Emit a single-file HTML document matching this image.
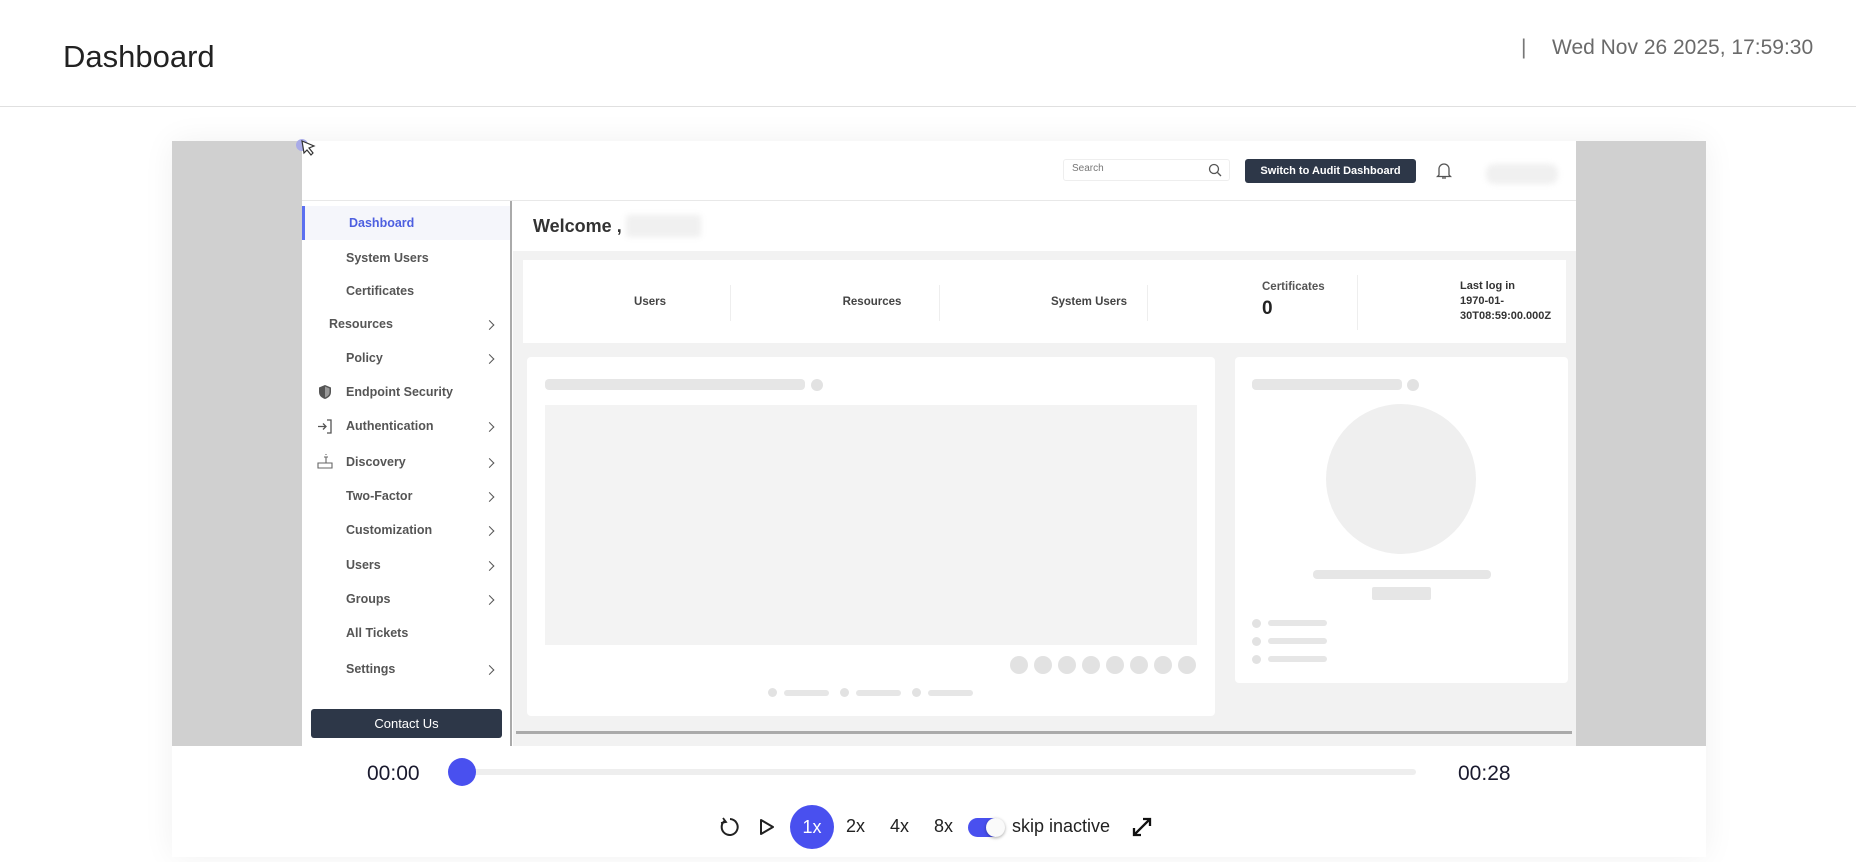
<!DOCTYPE html>
<html><head><meta charset="utf-8"><style>
*{box-sizing:border-box;margin:0;padding:0}
body{width:1856px;height:862px;overflow:hidden;background:#fff;font-family:"Liberation Sans",sans-serif;position:relative}
.a{position:absolute}
.sb{position:absolute;left:346px;font-size:12.5px;font-weight:bold;color:#555;transform:translateY(-50%)}
.chev{position:absolute;left:486px;width:7px;height:7px;border-right:1.5px solid #555;border-top:1.5px solid #555;transform:translateY(-50%) rotate(45deg)}
.sk{position:absolute;background:#e6e6e6;border-radius:4px}
.dot{position:absolute;background:#e2e2e2;border-radius:50%}
.st{position:absolute;font-size:11.5px;font-weight:bold;color:#444;transform:translate(-50%,-50%)}
.dv{position:absolute;top:285px;width:1px;height:36px;background:#eee}
</style></head><body>
<div class="a" style="left:63px;top:39px;font-size:31px;color:#222">Dashboard</div>
<div class="a" style="left:1521px;top:36px;font-size:21px;color:#777">|</div>
<div class="a" style="left:1552px;top:36px;font-size:21px;color:#6a6a6a">Wed Nov 26 2025, 17:59:30</div>
<div class="a" style="left:0;top:106px;width:1856px;height:1px;background:#e0e0e0"></div>

<div class="a" style="left:172px;top:141px;width:1534px;height:716px;background:#fff;box-shadow:0 0 30px rgba(0,0,0,0.06)"></div>
<div class="a" style="left:172px;top:141px;width:130px;height:605px;background:#d0d0d0"></div>
<div class="a" style="left:1576px;top:141px;width:130px;height:605px;background:#d0d0d0"></div>

<!-- app -->
<div class="a" style="left:302px;top:141px;width:1274px;height:605px;background:#fff"></div>
<div class="a" style="left:296px;top:139px;width:12px;height:12px;border-radius:50%;background:#a9abe8"></div>
<svg class="a" style="left:300px;top:139px" width="18" height="18" viewBox="0 0 18 18"><path d="M2 2 L14 7 L9 9 L13 14 L11 16 L7 11 L4 14 Z" fill="#fff" stroke="#333" stroke-width="1.2"/></svg>
<div class="a" style="left:302px;top:200px;width:1274px;height:1px;background:#e8e8e8"></div>
<div class="a" style="left:1063px;top:159px;width:167px;height:22px;border:1px solid #eee;border-radius:3px"></div>
<div class="a" style="left:1072px;top:163px;font-size:10px;color:#777">Search</div>
<svg class="a" style="left:1208px;top:163px" width="14" height="14" viewBox="0 0 14 14"><circle cx="6" cy="6" r="4.5" fill="none" stroke="#555" stroke-width="1.3"/><path d="M9.5 9.5 L13 13" stroke="#555" stroke-width="1.3"/></svg>
<div class="a" style="left:1245px;top:159px;width:171px;height:24px;background:#2d3748;border-radius:3px;color:#fff;font-size:11px;font-weight:bold;text-align:center;line-height:24px">Switch to Audit Dashboard</div>
<svg class="a" style="left:1436px;top:161px" width="16" height="20" viewBox="0 0 16 20"><path d="M3 14 V8 a5 5 0 0 1 10 0 V14 L14.5 15.5 H1.5 Z M6 17 h4" fill="none" stroke="#555" stroke-width="1.3"/></svg>
<div class="a" style="left:1486px;top:164px;width:72px;height:20px;background:#f0f0f0;border-radius:8px;filter:blur(3px)"></div>

<!-- sidebar -->
<div class="a" style="left:510px;top:201px;width:2px;height:545px;background:#aaa"></div>
<div class="a" style="left:302px;top:206px;width:208px;height:34px;background:#f5f6fb;border-left:3px solid #5b6ff0"></div>
<div class="sb" style="top:223px;left:349px;color:#4d5fe0">Dashboard</div>
<div class="sb" style="top:258px">System Users</div>
<div class="sb" style="top:291px">Certificates</div>
<div class="sb" style="top:324px;left:329px">Resources</div><div class="chev" style="top:325px"></div>
<div class="sb" style="top:358px">Policy</div><div class="chev" style="top:359px"></div>
<svg class="a" style="left:318px;top:384px" width="14" height="16" viewBox="0 0 14 16"><path d="M7 1 L13 3.5 V8 C13 12 10 14 7 15 C4 14 1 12 1 8 V3.5 Z" fill="#555"/><path d="M7 2.5 V13.5 C9.5 12.5 11.5 11 11.5 8 V4.5 Z" fill="#999"/></svg>
<div class="sb" style="top:392px">Endpoint Security</div>
<svg class="a" style="left:317px;top:419px" width="16" height="15" viewBox="0 0 16 15"><path d="M1 7.5 H9 M6 4.5 L9 7.5 L6 10.5 M10 1 H14 V14 H10" fill="none" stroke="#555" stroke-width="1.3"/></svg>
<div class="sb" style="top:426px">Authentication</div><div class="chev" style="top:427px"></div>
<svg class="a" style="left:317px;top:453px" width="16" height="16" viewBox="0 0 16 16"><path d="M1 10 H15 V15 H1 Z M9 10 V4 M7 4 H11 M9 1 V2" fill="none" stroke="#666" stroke-width="1.1"/></svg>
<div class="sb" style="top:462px">Discovery</div><div class="chev" style="top:463px"></div>
<div class="sb" style="top:496px">Two-Factor</div><div class="chev" style="top:497px"></div>
<div class="sb" style="top:530px">Customization</div><div class="chev" style="top:531px"></div>
<div class="sb" style="top:565px">Users</div><div class="chev" style="top:566px"></div>
<div class="sb" style="top:599px">Groups</div><div class="chev" style="top:600px"></div>
<div class="sb" style="top:633px">All Tickets</div>
<div class="sb" style="top:669px">Settings</div><div class="chev" style="top:670px"></div>
<div class="a" style="left:311px;top:709px;width:191px;height:29px;background:#2d3748;border-radius:3px;color:#fff;font-size:13px;text-align:center;line-height:29px">Contact Us</div>

<!-- main -->
<div class="a" style="left:513px;top:251px;width:1063px;height:495px;background:#f2f2f2"></div>
<div class="a" style="left:533px;top:216px;font-size:18px;font-weight:bold;color:#333">Welcome ,</div>
<div class="a" style="left:626px;top:215px;width:75px;height:22px;background:#f0f0f0;filter:blur(3px)"></div>
<div class="a" style="left:523px;top:260px;width:1043px;height:83px;background:#fff"></div>
<div class="st" style="left:650px;top:302px">Users</div>
<div class="st" style="left:872px;top:302px">Resources</div>
<div class="st" style="left:1089px;top:302px">System Users</div>
<div class="dv" style="left:730px"></div><div class="dv" style="left:939px"></div><div class="dv" style="left:1147px"></div><div class="dv" style="left:1357px;top:275px;height:55px"></div>
<div class="a" style="left:1262px;top:281px;font-size:11.5px;font-weight:bold;color:#555">Certificates</div>
<div class="a" style="left:1262px;top:298px;font-size:19px;font-weight:bold;color:#222">0</div>
<div class="a" style="left:1460px;top:279px;font-size:11px;font-weight:bold;color:#333;line-height:15px">Last log in<br>1970-01-<br>30T08:59:00.000Z</div>

<div class="a" style="left:527px;top:357px;width:688px;height:359px;background:#fff;border-radius:4px"></div>
<div class="sk" style="left:545px;top:379px;width:260px;height:11px"></div>
<div class="dot" style="left:811px;top:379px;width:12px;height:12px"></div>
<div class="a" style="left:545px;top:405px;width:652px;height:240px;background:#f3f3f3"></div>
<div class="dot" style="left:1010px;top:656px;width:18px;height:18px"></div>
<div class="dot" style="left:1034px;top:656px;width:18px;height:18px"></div>
<div class="dot" style="left:1058px;top:656px;width:18px;height:18px"></div>
<div class="dot" style="left:1082px;top:656px;width:18px;height:18px"></div>
<div class="dot" style="left:1106px;top:656px;width:18px;height:18px"></div>
<div class="dot" style="left:1130px;top:656px;width:18px;height:18px"></div>
<div class="dot" style="left:1154px;top:656px;width:18px;height:18px"></div>
<div class="dot" style="left:1178px;top:656px;width:18px;height:18px"></div>
<div class="dot" style="left:768px;top:688px;width:9px;height:9px"></div><div class="sk" style="left:784px;top:690px;width:45px;height:6px"></div>
<div class="dot" style="left:840px;top:688px;width:9px;height:9px"></div><div class="sk" style="left:856px;top:690px;width:45px;height:6px"></div>
<div class="dot" style="left:912px;top:688px;width:9px;height:9px"></div><div class="sk" style="left:928px;top:690px;width:45px;height:6px"></div>

<div class="a" style="left:1235px;top:357px;width:333px;height:326px;background:#fff;border-radius:4px"></div>
<div class="sk" style="left:1252px;top:379px;width:150px;height:11px"></div>
<div class="dot" style="left:1407px;top:379px;width:12px;height:12px"></div>
<div class="dot" style="left:1326px;top:404px;width:150px;height:150px;background:#efefef"></div>
<div class="sk" style="left:1313px;top:570px;width:178px;height:9px"></div>
<div class="sk" style="left:1372px;top:587px;width:59px;height:13px;border-radius:2px"></div>
<div class="dot" style="left:1252px;top:619px;width:9px;height:9px"></div><div class="sk" style="left:1268px;top:620px;width:59px;height:6px"></div>
<div class="dot" style="left:1252px;top:637px;width:9px;height:9px"></div><div class="sk" style="left:1268px;top:638px;width:59px;height:6px"></div>
<div class="dot" style="left:1252px;top:655px;width:9px;height:9px"></div><div class="sk" style="left:1268px;top:656px;width:59px;height:6px"></div>
<div class="a" style="left:516px;top:731px;width:1056px;height:3px;background:#aaa"></div>

<!-- player -->
<div class="a" style="left:367px;top:762px;font-size:21px;color:#1a1a2e">00:00</div>
<div class="a" style="left:1458px;top:762px;font-size:21px;color:#1a1a2e">00:28</div>
<div class="a" style="left:462px;top:769px;width:954px;height:6px;background:#eee;border-radius:3px"></div>
<div class="a" style="left:448px;top:758px;width:28px;height:28px;border-radius:50%;background:#4950ef"></div>
<svg class="a" style="left:719px;top:816px" width="22" height="22" viewBox="0 0 22 22"><path d="M6 4.5 A8 8 0 1 0 11 3" fill="none" stroke="#222" stroke-width="2"/><path d="M4 2 L7 6 L2 7" fill="none" stroke="#222" stroke-width="1.8"/></svg>
<svg class="a" style="left:759px;top:818px" width="16" height="18" viewBox="0 0 16 18"><path d="M2 2 L14 9 L2 16 Z" fill="none" stroke="#222" stroke-width="2" stroke-linejoin="round"/></svg>
<div class="a" style="left:790px;top:805px;width:44px;height:44px;border-radius:50%;background:#4950ef;color:#fff;font-size:18px;text-align:center;line-height:44px">1x</div>
<div class="a" style="left:846px;top:816px;font-size:18px;color:#222">2x</div>
<div class="a" style="left:890px;top:816px;font-size:18px;color:#222">4x</div>
<div class="a" style="left:934px;top:816px;font-size:18px;color:#222">8x</div>
<div class="a" style="left:968px;top:818px;width:36px;height:19px;border-radius:10px;background:#4950ef"></div>
<div class="a" style="left:986px;top:818px;width:19px;height:19px;border-radius:50%;background:#fafafa;box-shadow:0 1px 3px rgba(0,0,0,0.35)"></div>
<div class="a" style="left:1012px;top:816px;font-size:18px;color:#222">skip inactive</div>
<svg class="a" style="left:1131px;top:816px" width="22" height="22" viewBox="0 0 22 22"><path d="M3 19 L19 3 M12 3 H19 V10 M3 12 V19 H10" fill="none" stroke="#111" stroke-width="2.3"/></svg>
</body></html>
